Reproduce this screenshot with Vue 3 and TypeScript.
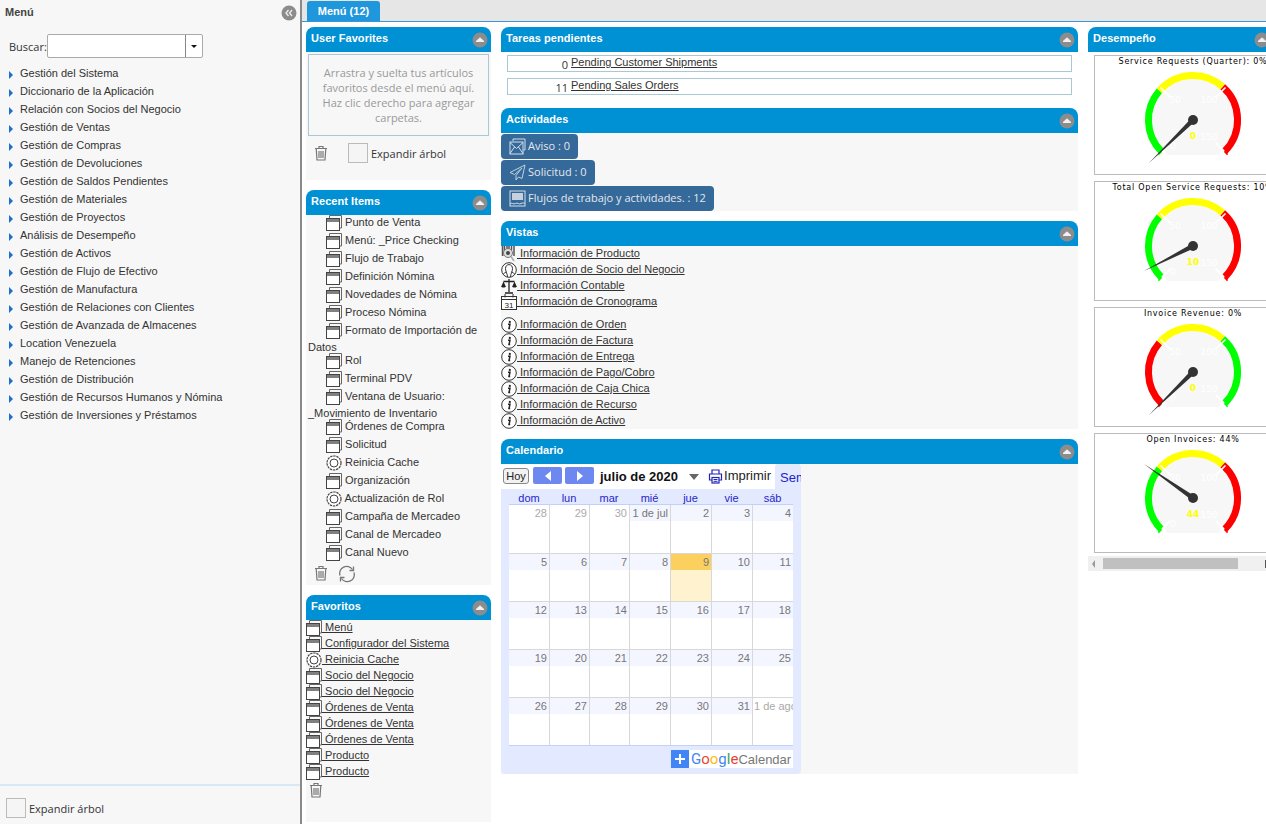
<script setup lang="ts">
const menu = [
  'Gestión del Sistema', 'Diccionario de la Aplicación', 'Relación con Socios del Negocio', 'Gestión de Ventas',
  'Gestión de Compras', 'Gestión de Devoluciones', 'Gestión de Saldos Pendientes', 'Gestión de Materiales',
  'Gestión de Proyectos', 'Análisis de Desempeño', 'Gestión de Activos', 'Gestión de Flujo de Efectivo',
  'Gestión de Manufactura', 'Gestión de Relaciones con Clientes', 'Gestión de Avanzada de Almacenes', 'Location Venezuela',
  'Manejo de Retenciones', 'Gestión de Distribución', 'Gestión de Recursos Humanos y Nómina', 'Gestión de Inversiones y Préstamos',
]
const recent = [
  ['win', 'Punto de Venta'], ['win', 'Menú: _Price Checking'], ['win', 'Flujo de Trabajo'], ['win', 'Definición Nómina'],
  ['win', 'Novedades de Nómina'], ['win', 'Proceso Nómina'], ['win', 'Formato de Importación de Datos'], ['win', 'Rol'],
  ['win', 'Terminal PDV'], ['win', 'Ventana de Usuario: _Movimiento de Inventario'], ['win', 'Órdenes de Compra'], ['win', 'Solicitud'],
  ['gear', 'Reinicia Cache'], ['win', 'Organización'], ['gear', 'Actualización de Rol'], ['win', 'Campaña de Mercadeo'],
  ['win', 'Canal de Mercadeo'], ['win', 'Canal Nuevo'],
]
const favorites = [
  ['win', 'Menú'], ['win', 'Configurador del Sistema'], ['gear', 'Reinicia Cache'], ['win', 'Socio del Negocio'],
  ['win', 'Socio del Negocio'], ['win', 'Órdenes de Venta'], ['win', 'Órdenes de Venta'], ['win', 'Órdenes de Venta'],
  ['win', 'Producto'], ['win', 'Producto'],
]
const viewsA = [
  ['product', 'Información de Producto'], ['person', 'Información de Socio del Negocio'],
  ['scale', 'Información Contable'],
]
const viewsB = ['Información de Orden', 'Información de Factura', 'Información de Entrega', 'Información de Pago/Cobro',
  'Información de Caja Chica', 'Información de Recurso', 'Información de Activo']
const dayNames = ['dom', 'lun', 'mar', 'mié', 'jue', 'vie', 'sáb']

interface Day { t: string; out?: boolean; today?: boolean }
const weeks: Day[][] = [
  [{ t: '28', out: true }, { t: '29', out: true }, { t: '30', out: true }, { t: '1 de jul' }, { t: '2' }, { t: '3' }, { t: '4' }],
  [{ t: '5' }, { t: '6' }, { t: '7' }, { t: '8' }, { t: '9', today: true }, { t: '10' }, { t: '11' }],
  [{ t: '12' }, { t: '13' }, { t: '14' }, { t: '15' }, { t: '16' }, { t: '17' }, { t: '18' }],
  [{ t: '19' }, { t: '20' }, { t: '21' }, { t: '22' }, { t: '23' }, { t: '24' }, { t: '25' }],
  [{ t: '26' }, { t: '27' }, { t: '28' }, { t: '29' }, { t: '30' }, { t: '31' }, { t: '1 de ago', out: true }],
]

const CX = 98
const CY = 64
function pt(deg: number, r: number): [number, number] {
  const a = (deg * Math.PI) / 180
  return [CX + r * Math.cos(a), CY - r * Math.sin(a)]
}
function arc(from: number, to: number, r: number): string {
  const [x1, y1] = pt(from, r)
  const [x2, y2] = pt(to, r)
  return `M${x1.toFixed(1)} ${y1.toFixed(1)}A${r} ${r} 0 0 1 ${x2.toFixed(1)} ${y2.toFixed(1)}`
}
function seg(deg: number, r1: number, r2: number): string {
  const [x1, y1] = pt(deg, r1)
  const [x2, y2] = pt(deg, r2)
  return `M${x1.toFixed(1)} ${y1.toFixed(1)}L${x2.toFixed(1)} ${y2.toFixed(1)}`
}
function needle(dx: number, dy: number): string {
  const len = Math.hypot(dx, dy)
  const nx = (-dy / len) * 2.4
  const ny = (dx / len) * 2.4
  return `${CX + nx},${CY + ny} ${CX - nx},${CY - ny} ${CX + dx},${CY + dy}`
}
const face = (() => {
  const [x1, y1] = pt(225, 41)
  const [x2, y2] = pt(-45, 41)
  return `M${x1} ${y1}A41 41 0 1 1 ${x2} ${y2}L${CX + 26} ${CY + 35}L${CX - 26} ${CY + 35}Z`
})()
const gauges = [
  { title: 'Service Requests (Quarter): 0%', first: '#00ff00', last: '#ff0000', value: '0', dx: -44, dy: 43 },
  { title: 'Total Open Service Requests: 10%', first: '#00ff00', last: '#ff0000', value: '10', dx: -49, dy: 25 },
  { title: 'Invoice Revenue: 0%', first: '#ff0000', last: '#00ff00', value: '0', dx: -44, dy: 43 },
  { title: 'Open Invoices: 44%', first: '#00ff00', last: '#ff0000', value: '44', dx: -49, dy: -34 },
].map((g) => ({
  ...g,
  a1: arc(225, 139, 44.5),
  a2: arc(139, 48, 44.5),
  a3: arc(48, -45, 44.5),
  needle: needle(g.dx, g.dy),
}))
const whiteTicks = [seg(225, 32, 44), seg(135, 32, 46), seg(45, 32, 46), seg(-45, 32, 44)]
const startTick = seg(225, 44.5, 49)
const endTick = seg(-45, 44.5, 49)
</script>

<template>
  <div class="app">
    <svg class="sprite" aria-hidden="true">
      <symbol id="win" viewBox="0 0 16 16">
        <path d="M3.500 3V.5H15.500V13H13.500" fill="none" stroke="#666" />
        <rect x=".5" y="3.500" width="13" height="12" fill="#fff" stroke="#444" />
        <rect x="1" y="4" width="12" height="3" fill="#808080" />
      </symbol>
      <symbol id="gear" viewBox="0 0 16 16">
        <circle cx="8" cy="8" r="7" fill="#fff" stroke="#444" stroke-width="1.200" stroke-dasharray="2.400 .8" />
        <circle cx="8" cy="8" r="4" fill="#fff" stroke="#444" />
      </symbol>
      <symbol id="info" viewBox="0 0 16 16">
        <circle cx="8" cy="8" r="7.300" fill="#fff" stroke="#333" />
        <circle cx="8.800" cy="4.900" r="1.100" fill="#222" />
        <path d="M7 7.200H9L8 11.400H9.200" fill="none" stroke="#222" stroke-width="1.500" />
      </symbol>
      <symbol id="person" viewBox="0 0 16 16">
        <circle cx="8" cy="8" r="7.300" fill="#fff" stroke="#333" />
        <path d="M6.500 15C6.500 11.500 4.500 10 4.500 6.600C4.500 4.200 6 2.600 8 2.600S11.500 4.200 11.500 6.600C11.500 10 9.500 11.500 9.500 15" fill="none" stroke="#333" />
        <path d="M2.300 12C3.500 10.800 4.500 10.600 5.600 10M13.700 12C12.500 10.800 11.500 10.600 10.400 10" fill="none" stroke="#333" />
      </symbol>
      <symbol id="scale" viewBox="0 0 16 16">
        <path d="M8 1V14M4 15H12M2.500 3.500H13.500" fill="none" stroke="#222" stroke-width="1.300" />
        <path d="M0 8H5C4.500 10 .5 10 0 8ZM11 8H16C15.500 10 11.500 10 11 8ZM2.500 3.500L.5 8H4.500ZM13.500 3.500L11.500 8H15.500Z" fill="#222" />
      </symbol>
      <symbol id="product" viewBox="0 0 16 16">
        <path d="M1.500 0V10M3.500 0V10M6 0V4M8 0V4M10.500 0V4M13 0V10" stroke="#555" stroke-width="1.500" fill="none" />
        <circle cx="7" cy="7" r="4.500" fill="#ddd" stroke="#777" />
        <circle cx="7" cy="7" r="2" fill="#444" />
        <path d="M10 10.500L13 15" stroke="#aaa" stroke-width="1.500" />
      </symbol>
      <symbol id="trash" viewBox="0 0 16 16">
        <path d="M2 3.500H14M6 3.500V1.500H10V3.500M3.200 3.500L4 15H12L12.800 3.500" fill="none" stroke="#777" stroke-width="1.200" />
        <path d="M6 6V13M8 6V13M10 6V13" stroke="#777" stroke-width="1.200" />
      </symbol>
      <symbol id="refresh" viewBox="0 0 18 18">
        <path d="M2 10.500A7 7 0 0 1 14.500 4.500M16 7.500A7 7 0 0 1 3.500 13.500" fill="none" stroke="#777" stroke-width="1.300" />
        <path d="M15.500 1.500V5.500H11.500M2.500 16.500V12.500H6.500" fill="none" stroke="#777" stroke-width="1.300" />
      </symbol>
      <symbol id="up" viewBox="0 0 16 16">
        <circle cx="8" cy="8" r="7.500" fill="#8c8c8c" />
        <path d="M4 9.500L8 5.800L12 9.500Z" fill="#f2f2f2" stroke="#f2f2f2" stroke-linejoin="round" />
      </symbol>
      <symbol id="mail" viewBox="0 0 17 17">
        <path d="M4 3V1H16V12H14.500" fill="none" stroke="#d5dfe8" />
        <rect x="1" y="4" width="13" height="12" fill="none" stroke="#d5dfe8" />
        <path d="M1 4.500L7.500 10.500L14 4.500M1 15.500L5.500 9M14 15.500L9.500 9" fill="none" stroke="#d5dfe8" />
      </symbol>
      <symbol id="send" viewBox="0 0 17 17">
        <path d="M16 1L1 8.500L5.500 10.500L13 4L7 11.500V16L9.500 13L13 14.500Z" fill="none" stroke="#c3d0db" />
      </symbol>
      <symbol id="flow" viewBox="0 0 17 17">
        <rect x="1" y="1" width="15" height="15" fill="none" stroke="#d5dfe8" />
        <rect x="3" y="3" width="11" height="7" fill="#c5d2dd" />
        <path d="M1 14C3 12 4.500 15 6.500 13.500S10 15 12 13.500S15 14 16 13" fill="none" stroke="#d5dfe8" />
      </symbol>
    </svg>

    <aside class="side">
      <div class="side-head">
        <span class="side-title">Menú</span>
        <svg class="side-collapse" viewBox="0 0 16 16">
          <circle cx="8" cy="8" r="7.500" fill="#8c8c8c" />
          <path d="M7.500 5L5 8L7.500 11M11 5L8.500 8L11 11" fill="none" stroke="#eee" stroke-width="1.300" />
        </svg>
      </div>
      <div class="search">
        <label class="search-label">Buscar:</label>
        <div class="search-box">
          <span class="search-input"></span>
          <span class="search-drop"><i class="tri"></i></span>
        </div>
      </div>
      <ul class="menu">
        <li v-for="m in menu" :key="m" class="menu-item"><i class="arrow"></i><span>{{ m }}</span></li>
      </ul>
      <div class="side-foot">
        <span class="check"></span><span class="expand">Expandir árbol</span>
      </div>
    </aside>

    <main class="main">
      <div class="tabs"><span class="tab">Menú (12)</span></div>
      <div class="cols">
        <div class="col col-a">
          <section class="panel grey uf">
            <header class="phead"><span>User Favorites</span><svg class="pbtn"><use href="#up" /></svg></header>
            <div class="drop">Arrastra y suelta tus artículos favoritos desde el menú aquí. Haz clic derecho para agregar carpetas.</div>
            <div class="uf-tools">
              <svg class="trash"><use href="#trash" /></svg>
              <span class="check"></span><span class="expand">Expandir árbol</span>
            </div>
          </section>

          <section class="panel grey recent">
            <header class="phead"><span>Recent Items</span><svg class="pbtn"><use href="#up" /></svg></header>
            <div class="recent-list">
              <div v-for="r in recent" :key="r[1]" class="recent-item" :class="{ wrap: r[1].length > 28 }"><svg class="ic"><use :href="'#' + r[0]" /></svg> {{ r[1] }}</div>
            </div>
            <div class="recent-tools">
              <svg class="trash"><use href="#trash" /></svg>
              <svg class="refresh"><use href="#refresh" /></svg>
            </div>
          </section>

          <section class="panel grey favs">
            <header class="phead"><span>Favoritos</span><svg class="pbtn"><use href="#up" /></svg></header>
            <a v-for="(f, i) in favorites" :key="i" class="link"><svg class="ic"><use :href="'#' + f[0]" /></svg> {{ f[1] }}</a>
            <svg class="trash fav-trash"><use href="#trash" /></svg>
          </section>
        </div>

        <div class="col col-b">
          <section class="panel tasks">
            <header class="phead"><span>Tareas pendientes</span><svg class="pbtn"><use href="#up" /></svg></header>
            <div class="task"><span class="num">0</span><a class="tlink">Pending Customer Shipments</a></div>
            <div class="task"><span class="num">11</span><a class="tlink">Pending Sales Orders</a></div>
          </section>

          <section class="panel grey">
            <header class="phead"><span>Actividades</span><svg class="pbtn"><use href="#up" /></svg></header>
            <div class="acts">
              <span class="act"><svg class="act-ic"><use href="#mail" /></svg><span class="act-t">Aviso : 0</span></span>
              <span class="act"><svg class="act-ic"><use href="#send" /></svg><span class="act-t">Solicitud : 0</span></span>
              <span class="act"><svg class="act-ic"><use href="#flow" /></svg><span class="act-t">Flujos de trabajo y actividades. : 12</span></span>
            </div>
          </section>

          <section class="panel grey views">
            <header class="phead"><span>Vistas</span><svg class="pbtn"><use href="#up" /></svg></header>
            <a v-for="v in viewsA" :key="v[1]" class="link"><svg class="ic"><use :href="'#' + v[0]" /></svg> {{ v[1] }}</a>
            <a class="link"><svg class="ic" viewBox="0 0 16 16">
              <rect x=".5" y="2.500" width="15" height="13" fill="#fff" stroke="#333" />
              <path d="M.5 5.500H15.500M4 0V3.500M12 0V3.500" stroke="#333" fill="none" />
              <text x="8" y="14" text-anchor="middle" font-size="8" font-family="Liberation Sans, sans-serif" fill="#222">31</text>
            </svg> Información de Cronograma</a>
            <div class="views-gap"></div>
            <a v-for="v in viewsB" :key="v" class="link"><svg class="ic"><use href="#info" /></svg> {{ v }}</a>
          </section>

          <section class="panel grey calpanel">
            <header class="phead"><span>Calendario</span><svg class="pbtn"><use href="#up" /></svg></header>
            <div class="gcal">
              <div class="gbar">
                <span class="hoy">Hoy</span>
                <span class="nav"><i class="nav-l"></i></span>
                <span class="nav"><i class="nav-r"></i></span>
                <b class="month">julio de 2020</b>
                <i class="month-tri"></i>
                <svg class="printer" viewBox="0 0 15 15">
                  <path d="M4 5V1H11V5M4 11H1.500V5H13.500V11H11" fill="none" stroke="#2222bb" stroke-width="1.200" />
                  <rect x="4" y="8.500" width="7" height="5.500" fill="none" stroke="#2222bb" stroke-width="1.200" />
                  <path d="M5.500 10.500H9.500M5.500 12.300H9.500" stroke="#2222bb" />
                </svg>
                <span class="print">Imprimir</span>
                <span class="sem">Sem</span>
              </div>
              <div class="gbody">
                <div class="ghead"><span v-for="d in dayNames" :key="d">{{ d }}</span></div>
                <div v-for="(w, wi) in weeks" :key="wi" class="gweek">
                  <div v-for="(d, di) in w" :key="di" class="gcell" :class="{ today: d.today, out: d.out }">
                    <div class="gdate">{{ d.t }}</div>
                  </div>
                </div>
                <div class="gfoot">
                  <span class="gbtn">
                    <span class="gplus"></span>
                    <span class="glogo"><span class="c1">G</span><span class="c2">o</span><span class="c3">o</span><span class="c1">g</span><span class="c4">l</span><span class="c2">e</span></span>
                    <span class="gcalname">Calendar</span>
                  </span>
                </div>
              </div>
            </div>
          </section>
        </div>

        <div class="col col-c">
          <section class="panel perf">
            <header class="phead"><span>Desempeño</span><svg class="pbtn"><use href="#up" /></svg></header>
            <div class="charts">
              <div v-for="g in gauges" :key="g.title" class="chart">
                <svg class="gauge" viewBox="0 0 198 118">
                  <text x="98" y="8" text-anchor="middle" class="g-title">{{ g.title }}</text>
                  <path :d="face" fill="#f7f7f7" />
                  <path :d="g.a1" fill="none" :stroke="g.first" stroke-width="7" />
                  <path :d="g.a2" fill="none" stroke="#ffff00" stroke-width="7" />
                  <path :d="g.a3" fill="none" :stroke="g.last" stroke-width="7" />
                  <path :d="startTick" :stroke="g.first" stroke-width="1.500" />
                  <path :d="endTick" :stroke="g.last" stroke-width="1.500" />
                  <path v-for="t in whiteTicks" :key="t" :d="t" stroke="#fff" stroke-width="1.600" />
                  <text x="80" y="46.500" class="g-label" text-anchor="middle">50</text>
                  <text x="114" y="46.500" class="g-label" text-anchor="middle">100</text>
                  <text x="114" y="83.500" class="g-label" text-anchor="middle">150</text>
                  <text x="78" y="92.500" class="g-label" text-anchor="middle">0</text>
                  <text x="98" y="82.500" class="g-value" text-anchor="middle">{{ g.value }}</text>
                  <polygon :points="g.needle" fill="#333" />
                  <circle :cx="98" :cy="64" r="5" fill="#333" />
                </svg>
              </div>
            </div>
            <div class="hscroll">
              <i class="sc-l"></i>
              <span class="sc-thumb"></span>
              <i class="sc-r"></i>
            </div>
          </section>
        </div>
      </div>
    </main>
  </div>
</template>

<style>
html, body { margin: 0; overflow: hidden; background: #fff; }
</style>

<style scoped>
.app {
  width: 1266px;
  height: 824px;
  display: flex;
  overflow: hidden;
  font-family: "Liberation Sans", Arial, sans-serif;
  font-size: 11px;
  color: #333;
  background: #fff;
}
.sprite { position: absolute; width: 0; height: 0; overflow: hidden; }

.side {
  width: 300px;
  flex: none;
  height: 824px;
  box-sizing: border-box;
  background: #f7f7f7;
  display: flex;
  flex-direction: column;
}
.side-head { height: 24px; display: flex; align-items: center; justify-content: space-between; padding: 0 3px 0 5px; }
.side-title { font-weight: bold; color: #444; }
.side-collapse { width: 16px; height: 16px; margin-top: 1px; }
.search { display: flex; align-items: center; margin: 10px 0 0 9px; height: 24px; }
.search-label { font-family: "Open Sans", sans-serif; font-size: 11px; color: #333; width: 38px; }
.search-box {
  display: flex;
  width: 156px;
  height: 24px;
  box-sizing: border-box;
  border: 1px solid #aaa;
  border-radius: 2px;
  background: #fff;
}
.search-input { flex: 1; }
.search-drop {
  width: 17px;
  box-sizing: border-box;
  border-left: 1px solid #888;
  display: flex;
  align-items: center;
  justify-content: center;
}
.tri { width: 0; height: 0; border: 3px solid transparent; border-top: 3.500px solid #111; border-bottom: 0; }
.menu { list-style: none; margin: 6px 0 0; padding: 0; flex: 1; }
.menu-item { height: 18px; line-height: 18px; display: flex; align-items: center; color: #333; }
.arrow {
  width: 0;
  height: 0;
  margin: 4px 7px 0 9px;
  border-left: 4px solid #1a6fd0;
  border-top: 4px solid transparent;
  border-bottom: 4px solid transparent;
}
.side-foot {
  border-top: 2px solid #d9e8f5;
  height: 40px;
  box-sizing: border-box;
  padding: 12px 0 0 6px;
  display: flex;
  align-items: flex-start;
}
.check {
  width: 20px;
  height: 20px;
  box-sizing: border-box;
  border: 1px solid #bbb;
  background: #f5f5f5;
  flex: none;
}
.expand { font-family: "Open Sans", sans-serif; font-size: 11px; color: #333; margin: 3px 0 0 3px; }

.main { flex: 1; min-width: 0; border-left: 2px solid #8a8a8a; overflow: hidden; }
.tabs {
  height: 22px;
  box-sizing: border-box;
  background: #e6e6e6;
  border-bottom: 1px solid #3b97d3;
  padding: 1px 0 0 5px;
}
.tab {
  display: inline-block;
  width: 73px;
  height: 20px;
  line-height: 20px;
  text-align: center;
  background: #1f97dc;
  color: #fff;
  font-weight: bold;
  border-radius: 3px 3px 0 0;
}
.cols { display: flex; gap: 10px; padding: 5px 0 0 4px; width: 1100px; }
.col { display: flex; flex-direction: column; gap: 10px; flex: none; }
.col-a { width: 185px; }
.col-b { width: 577px; }
.col-c { width: 185px; }
.panel { border-radius: 8px 8px 0 0; }
.grey { background: #f7f7f7; }
.phead {
  height: 25px;
  background: #0090d4;
  border-radius: 8px 8px 0 0;
  color: #fff;
  font-weight: bold;
  letter-spacing: 0.05px;
  display: flex;
  align-items: center;
  justify-content: space-between;
  padding: 0 3px 0 5px;
}
.phead span { margin-top: -3px; }
.pbtn { width: 16px; height: 16px; flex: none; margin-top: 1px; }

.uf { height: 153px; }
.drop {
  margin: 2px 2px 0;
  height: 82px;
  box-sizing: border-box;
  border: 1px solid #a9c8d4;
  padding: 10px 10px 0;
  text-align: center;
  font-family: "Open Sans", sans-serif;
  font-size: 11px;
  line-height: 15px;
  color: #999;
}
.uf-tools { display: flex; align-items: flex-start; margin-top: 7px; padding-left: 7px; }
.uf-tools .trash { margin: 2px 19px 0 0; }
.trash { width: 16px; height: 16px; flex: none; display: block; }

.recent { height: 395px; }
.recent-list { padding: 0 2px; height: 351px; margin-top: -1px; }
.recent-item { height: 18px; line-height: 17px; color: #333; }
.recent-item.wrap { height: 30px; }
.recent-item .ic { margin-left: 18px; }
.ic { width: 16px; height: 16px; vertical-align: -5px; }
.recent-tools { display: flex; gap: 9px; padding: 0 0 0 7px; }
.refresh { width: 18px; height: 18px; }

.favs { height: 227px; }
.link {
  display: block;
  height: 16px;
  line-height: 14px;
  text-decoration: underline;
  color: #333;
  white-space: nowrap;
}
.fav-trash { margin: 2px 0 0 2px; }

.tasks { height: 71px; }
.task {
  margin: 3px 6px 6px;
  height: 17px;
  box-sizing: border-box;
  border: 1px solid #a9c8d4;
  background: #fff;
  display: flex;
  line-height: 13px;
}
.num { width: 60px; text-align: right; padding-top: 2px; font-family: "Open Sans", sans-serif; }
.tlink { margin-left: 3px; text-decoration: underline; }

.acts { display: flex; flex-direction: column; align-items: flex-start; gap: 1px; padding-top: 1px; }
.act {
  display: inline-flex;
  align-items: center;
  height: 25px;
  padding: 0 8px;
  border-radius: 4px;
  background: #34699a;
  color: #e3e8ee;
  font-family: "Open Sans", sans-serif;
  font-size: 11px;
}
.act-ic { width: 17px; height: 17px; margin-right: 2px; }
.act-t { margin-top: -2px; }

.views { height: 208px; }
.views-gap { height: 7px; }

.calpanel { height: 335px; }
.gcal { width: 300px; }
.gbar { height: 25px; display: flex; align-items: flex-start; background: #fff; padding-left: 2px; }
.hoy {
  margin-top: 4px;
  width: 26px;
  height: 16px;
  box-sizing: border-box;
  border: 1px solid #888;
  border-radius: 3px;
  background: #f2f2f2;
  text-align: center;
  line-height: 14px;
  color: #222;
}
.nav {
  margin: 3px 0 0 4px;
  width: 29px;
  height: 17px;
  background: #6d89f0;
  border-radius: 2px;
  display: flex;
  align-items: center;
  justify-content: center;
}
.nav + .nav { margin-left: 3px; }
.nav-l, .nav-r { width: 0; height: 0; border-top: 5px solid transparent; border-bottom: 5px solid transparent; }
.nav-l { border-right: 6px solid #fff; }
.nav-r { border-left: 6px solid #fff; }
.month { margin: 5px 0 0 6px; font-size: 13px; color: #111; }
.month-tri { margin: 10px 0 0 11px; width: 0; height: 0; border-left: 5px solid transparent; border-right: 5px solid transparent; border-top: 6px solid #666; }
.printer { width: 15px; height: 15px; margin: 5px 0 0 9px; }
.print { font-size: 13px; color: #222; margin: 4px 0 0 1px; }
.sem {
  margin-left: 4px;
  width: 26px;
  height: 26px;
  flex: none;
  background: #e3e9ff;
  overflow: hidden;
  white-space: nowrap;
  color: #2222cc;
  font-size: 13px;
  line-height: 28px;
  padding-left: 5px;
  box-sizing: border-box;
  border-radius: 3px 3px 0 0;
}
.gbody {
  background: #e3e9ff;
  height: 285px;
  box-sizing: border-box;
  padding: 3px 8px 0;
  border-radius: 0 0 4px 4px;
}
.ghead, .gweek { display: grid; grid-template-columns: 40px 40px 40px 41px 41px 41px 41px; }
.ghead { height: 13px; line-height: 13px; text-align: center; color: #2626c8; border-bottom: 1px solid #c3d0f7; box-sizing: border-box; }
.gweek { height: 48px; background: #fff; border-bottom: 1px solid #d8d8d8; box-sizing: border-box; }
.gweek:nth-child(2) { height: 49px; }
.gweek:nth-child(6) { border-bottom-color: #c3d0f7; }
.gcell { border-left: 1px solid #d8d8d8; overflow: hidden; min-width: 0; height: 100%; box-sizing: border-box; }
.gcell:first-child { border-left: 0; }
.gdate {
  height: 16px;
  line-height: 16px;
  padding-right: 2px;
  text-align: right;
  background: #f4f6ff;
  color: #777;
  white-space: nowrap;
}
.out .gdate { background: #fff; color: #aaa; }
.today { background: #fff3cf; }
.today .gdate { background: #fbd05f; }
.gweek:nth-child(6) .gcell:last-child .gdate { text-align: left; padding: 0 0 0 1px; }
.gfoot { display: flex; justify-content: flex-end; padding-top: 4px; }
.gbtn { display: flex; align-items: center; width: 122px; height: 18px; background: #fff; }
.gplus {
  width: 18px;
  height: 18px;
  flex: none;
  background:
    linear-gradient(#fff, #fff) center / 10px 2px no-repeat,
    linear-gradient(#fff, #fff) center / 2px 10px no-repeat,
    #4285f4;
}
.glogo { margin-left: 2px; font-size: 15px; font-weight: 400; font-family: "Roboto", sans-serif; }
.c1 { color: #4285f4; }
.c2 { color: #ea4335; }
.c3 { color: #fbbc05; }
.c4 { color: #34a853; }
.gcalname { margin-left: 0; font-size: 13px; color: #777; }

.perf { width: 185px; }
.charts { display: flex; flex-direction: column; gap: 6px; padding: 3px 0 0 6px; }
.chart { width: 200px; height: 120px; box-sizing: border-box; border: 1px solid #bbb; background: #fff; flex: none; }
.gauge { width: 198px; height: 118px; display: block; }
.g-title { font-family: "DejaVu Sans", sans-serif; font-size: 8px; letter-spacing: 0.75px; fill: #000; }
.g-label { font-family: "DejaVu Sans", sans-serif; font-size: 9px; fill: #fff; }
.g-value { font-family: "DejaVu Sans", sans-serif; font-size: 9px; font-weight: bold; fill: #ffff00; }
.hscroll { margin-top: 3px; height: 15px; background: #f0f0f0; display: flex; align-items: center; width: 185px; }
.sc-l { width: 0; height: 0; margin: 0 8px 0 4px; border-top: 4px solid transparent; border-bottom: 4px solid transparent; border-right: 3.500px solid #999; }
.sc-thumb { width: 135px; height: 11px; background: #c0c0c0; flex: none; }
.sc-r { width: 2px; height: 8px; margin-left: 27px; background: #555; }
</style>
